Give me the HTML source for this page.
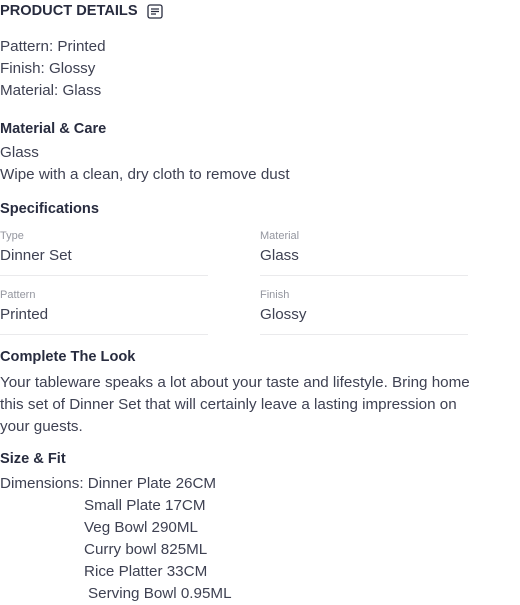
<!DOCTYPE html>
<html><head><style>
body{margin:0;width:520px;height:605px;background:#fff;position:relative;overflow:hidden;font-family:"Liberation Sans",sans-serif;color:#282c3f}
.t{position:absolute;white-space:nowrap;font-size:15.2px;line-height:22px;left:0;margin-top:1px;color:#3e4152}
.h{font-weight:bold;font-size:14.6px;color:#282c3f}
.l{font-size:11px;color:#94969f;line-height:14px}
.d{position:absolute;height:1px;background:#eaeaec;width:208px}
</style></head><body>
<div class="t h" style="top:-1px">PRODUCT DETAILS</div>
<svg style="position:absolute;left:147px;top:4px" width="16" height="15" viewBox="0 0 16 15"><rect x="1" y="1" width="14" height="13" rx="2" fill="none" stroke="#282c3f" stroke-width="1.3"/><path d="M4 5h8M4 7.5h8M4 10h5" stroke="#282c3f" stroke-width="1.2"/></svg>
<div class="t" style="top:35px">Pattern: Printed</div>
<div class="t" style="top:57px">Finish: Glossy</div>
<div class="t" style="top:79px">Material: Glass</div>
<div class="t h" style="top:117px">Material &amp; Care</div>
<div class="t" style="top:141px">Glass</div>
<div class="t" style="top:163px">Wipe with a clean, dry cloth to remove dust</div>
<div class="t h" style="top:197px">Specifications</div>
<div class="t l" style="top:228px">Type</div>
<div class="t l" style="top:228px;left:260px">Material</div>
<div class="t" style="top:244px">Dinner Set</div>
<div class="t" style="top:244px;left:260px">Glass</div>
<div class="d" style="top:275px;left:0"></div>
<div class="d" style="top:275px;left:260px"></div>
<div class="t l" style="top:287px">Pattern</div>
<div class="t l" style="top:287px;left:260px">Finish</div>
<div class="t" style="top:303px">Printed</div>
<div class="t" style="top:303px;left:260px">Glossy</div>
<div class="d" style="top:334px;left:0"></div>
<div class="d" style="top:334px;left:260px"></div>
<div class="t h" style="top:345px">Complete The Look</div>
<div class="t" style="top:371px">Your tableware speaks a lot about your taste and lifestyle. Bring home</div>
<div class="t" style="top:393px">this set of Dinner Set that will certainly leave a lasting impression on</div>
<div class="t" style="top:415px">your guests.</div>
<div class="t h" style="top:447px">Size &amp; Fit</div>
<div class="t" style="top:472px">Dimensions: Dinner Plate 26CM</div>
<div class="t" style="top:494px;left:84px">Small Plate 17CM</div>
<div class="t" style="top:516px;left:84px">Veg Bowl 290ML</div>
<div class="t" style="top:538px;left:84px">Curry bowl 825ML</div>
<div class="t" style="top:560px;left:84px">Rice Platter 33CM</div>
<div class="t" style="top:582px;left:88px">Serving Bowl 0.95ML</div>
</body></html>
